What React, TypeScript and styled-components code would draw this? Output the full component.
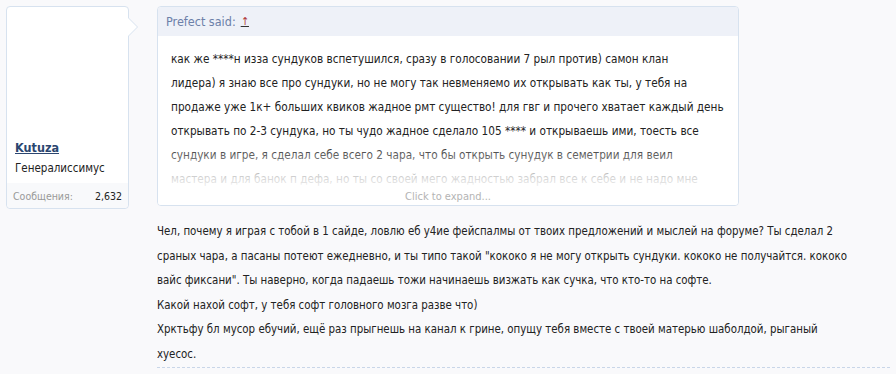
import React from "react";
import styled, { createGlobalStyle } from "styled-components";

const GlobalStyle = createGlobalStyle`
  html, body { margin: 0; padding: 0; }
  body {
    background: #f9f9fb;
    font-family: "DejaVu Sans", sans-serif;
    font-stretch: condensed;
    font-size: 13px;
    color: #222;
  }
`;

const Page = styled.div`
  display: flex;
  align-items: flex-start;
  padding: 6px 6px 0 6px;
  gap: 28px;
`;

const UserCard = styled.div`
  position: relative;
  flex: none;
  width: 121px;
  height: 201px;
  background: #fff;
  border: 1px solid #d7e2ef;
  border-radius: 4px;
  display: flex;
  flex-direction: column;
  justify-content: flex-end;
  &::before,
  &::after {
    content: "";
    position: absolute;
    top: 10px;
    border-style: solid;
    border-color: transparent;
  }
  &::before {
    right: -10px;
    border-width: 10px 0 10px 10px;
    border-left-color: #d7e2ef;
  }
  &::after {
    right: -9px;
    top: 11px;
    border-width: 9px 0 9px 9px;
    border-left-color: #fff;
  }
`;

const UserInfo = styled.div`
  padding: 0 8px 8px 8px;
  display: flex;
  flex-direction: column;
  gap: 6px;
`;

const UserName = styled.a`
  font-weight: bold;
  font-size: 12.5px;
  color: #2b4670;
  text-decoration: underline;
`;

const UserTitle = styled.div`
  font-size: 11.5px;
  color: #222;
`;

const Stats = styled.div`
  display: flex;
  justify-content: space-between;
  align-items: center;
  height: 25px;
  padding: 0 6px;
  background: #f8f9fb;
  border-radius: 0 0 4px 4px;
  font-size: 10.5px;
`;

const StatLabel = styled.span`
  color: #999;
`;

const StatValue = styled.span`
  color: #222;
`;

const Main = styled.div`
  width: 733px;
  flex: none;
  display: flex;
  flex-direction: column;
`;

const Quote = styled.div`
  width: 580px;
  height: 198px;
  background: #fff;
  border: 1px solid #d7e2ef;
  border-radius: 4px;
  display: flex;
  flex-direction: column;
  overflow: hidden;
`;

const QuoteHeader = styled.div`
  height: 29px;
  flex: none;
  display: flex;
  align-items: center;
  padding: 0 8px;
  background: #eef1f8;
  color: #6c80a8;
  font-size: 12.5px;
`;

const UpArrow = styled.a`
  margin-left: 5px;
  color: #b13a3a;
  font-size: 11px;
  text-decoration: underline;
  text-decoration-color: #333;
`;

const QuoteBody = styled.div`
  position: relative;
  flex: 1;
  overflow: hidden;
  padding: 11px 2px 0 13px;
  line-height: 24px;
  font-size: 11.7px;
  color: #222;
`;

const Line = styled.div`
  white-space: nowrap;
`;

const Fade = styled.div`
  position: absolute;
  left: 0;
  right: 0;
  bottom: 0;
  height: 62px;
  background: linear-gradient(to bottom, rgba(255,255,255,0) 0%, rgba(255,255,255,0.8) 55%, #fff 80%);
  display: flex;
  align-items: flex-end;
  justify-content: center;
  padding-bottom: 0;
  color: #b4b4b4;
  font-size: 11px;
  line-height: 16px;
`;

const Message = styled.div`
  margin-top: 13px;
  padding-bottom: 1px;
  line-height: 24.5px;
  font-size: 11.4px;
  color: #222;
  border-bottom: 1px dashed #c9d6e8;
`;

const quoteLines = [
  "как же ****н изза сундуков вспетушился, сразу в голосовании 7 рыл против) самон клан",
  "лидера) я знаю все про сундуки, но не могу так невменяемо их открывать как ты, у тебя на",
  "продаже уже 1к+ больших квиков жадное рмт существо! для гвг и прочего хватает каждый день",
  "открывать по 2-3 сундука, но ты чудо жадное сделало 105 **** и открываешь ими, тоесть все",
  "сундуки в игре, я сделал себе всего 2 чара, что бы открыть сунудук в семетрии для веил",
  "мастера и для банок п дефа, но ты со своей мего жадностью забрал все к себе и не надо мне",
];

const messageLines = [
  "Чел, почему я играя с тобой в 1 сайде, ловлю еб у4ие фейспалмы от твоих предложений и мыслей на форуме? Ты сделал 2",
  "сраных чара, а пасаны потеют ежедневно, и ты типо такой \"кококо я не могу открыть сундуки. кококо не получайтся. кококо",
  "вайс фиксани\". Ты наверно, когда падаешь тожи начинаешь визжать как сучка, что кто-то на софте.",
  "Какой нахой софт, у тебя софт головного мозга разве что)",
  "Хрктьфу бл мусор ебучий, ещё раз прыгнешь на канал к грине, опущу тебя вместе с твоей матерью шаболдой, рыганый",
  "хуесос.",
];

export default function App() {
  return (
    <>
      <GlobalStyle />
      <Page>
        <UserCard>
          <UserInfo>
            <UserName href="#">Kutuza</UserName>
            <UserTitle>Генералиссимус</UserTitle>
          </UserInfo>
          <Stats>
            <StatLabel>Сообщения:</StatLabel>
            <StatValue>2,632</StatValue>
          </Stats>
        </UserCard>
        <Main>
          <Quote>
            <QuoteHeader>
              Prefect said:<UpArrow href="#">↑</UpArrow>
            </QuoteHeader>
            <QuoteBody>
              {quoteLines.map((l, i) => (
                <Line key={i}>{l}</Line>
              ))}
              <Fade>Click to expand...</Fade>
            </QuoteBody>
          </Quote>
          <Message>
            {messageLines.map((l, i) => (
              <Line key={i}>{l}</Line>
            ))}
          </Message>
        </Main>
      </Page>
    </>
  );
}
